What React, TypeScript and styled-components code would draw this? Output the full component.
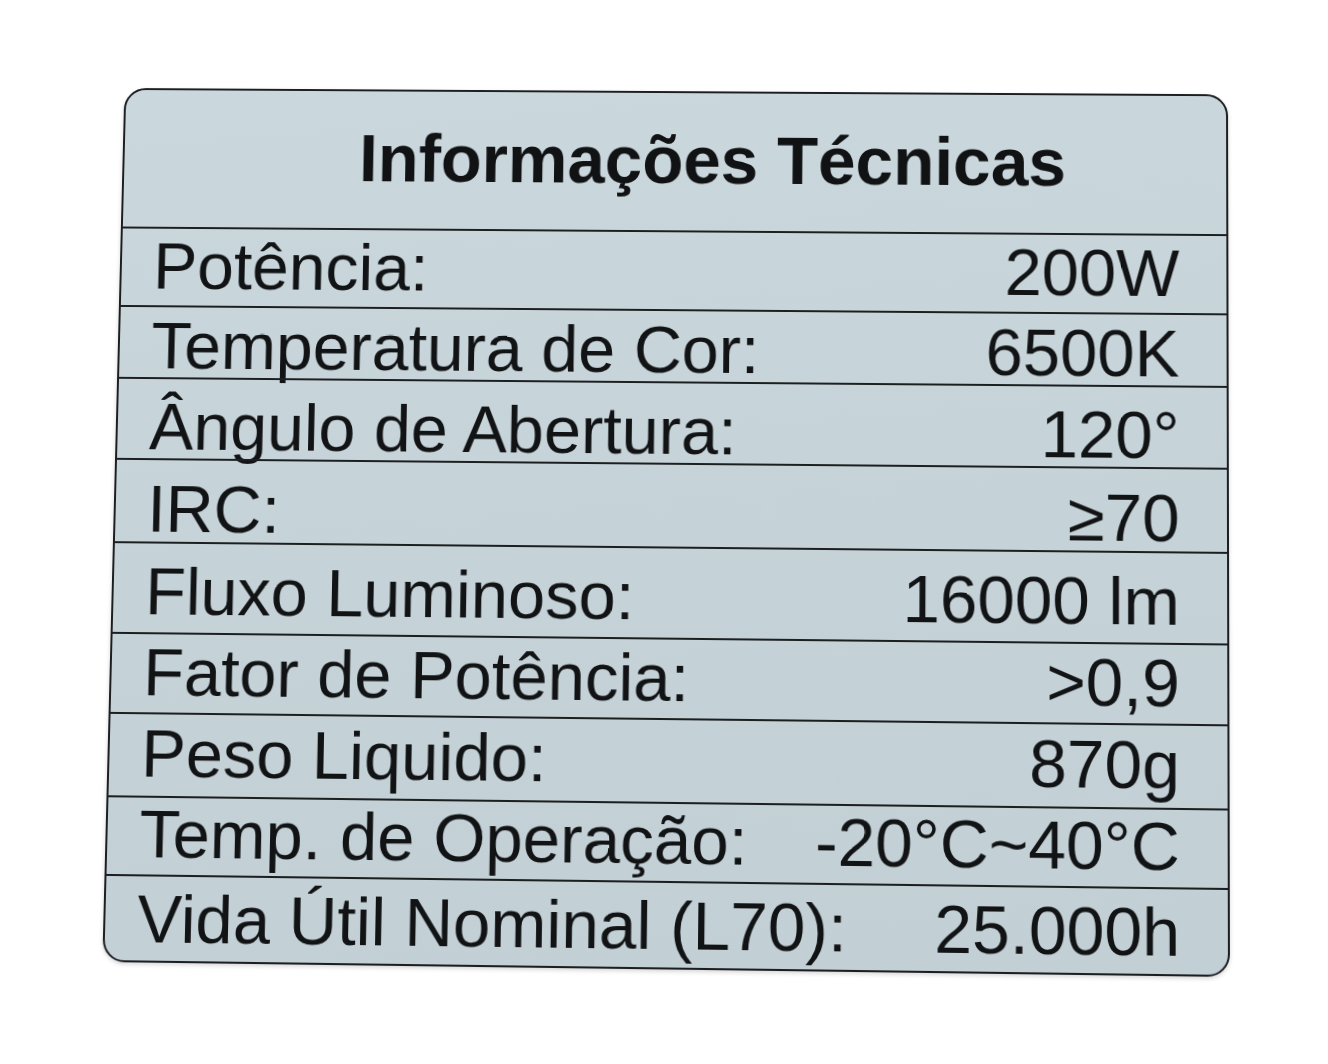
import React from "react";
import styled, { createGlobalStyle } from "styled-components";

const GlobalStyle = createGlobalStyle`
  html, body {
    margin: 0;
    padding: 0;
    background: #ffffff;
  }
  body {
    font-family: "Liberation Sans", Arial, Helvetica, sans-serif;
    color: #131517;
  }
  #root {
    width: 1328px;
    height: 1064px;
    overflow: hidden;
  }
`;

/* Local (flat) size of the label and where its layout box starts on the page */
const ORIGIN_X = 112;
const ORIGIN_Y = 90;
const W = 1118;
const H = 880;

/* Corners of the label as photographed (TL, TR, BR, BL) */
const QUAD: [number, number][] = [
  [124.4, 88],
  [1228, 94.3],
  [1230, 977],
  [102.3, 962],
];

/* Homography from the flat rectangle to the photographed quadrilateral */
function perspectiveMatrix(): string {
  const [p0, p1, p2, p3] = QUAD.map(([x, y]) => [x - ORIGIN_X, y - ORIGIN_Y]);
  const [x0, y0] = p0;
  const [x1, y1] = p1;
  const [x2, y2] = p2;
  const [x3, y3] = p3;
  const sx = x0 - x1 + x2 - x3;
  const sy = y0 - y1 + y2 - y3;
  const dx1 = x1 - x2;
  const dx2 = x3 - x2;
  const dy1 = y1 - y2;
  const dy2 = y3 - y2;
  const den = dx1 * dy2 - dx2 * dy1;
  const g = (sx * dy2 - dx2 * sy) / den;
  const h = (dx1 * sy - sx * dy1) / den;
  const a = x1 - x0 + g * x1;
  const b = x3 - x0 + h * x3;
  const c = x0;
  const d = y1 - y0 + g * y1;
  const e = y3 - y0 + h * y3;
  const f = y0;
  const v = [a / W, d / W, 0, g / W, b / H, e / H, 0, h / H, 0, 0, 1, 0, c, f, 0, 1];
  return `matrix3d(${v.map((n) => n.toFixed(8)).join(", ")})`;
}

const MATRIX = perspectiveMatrix();

const Page = styled.div`
  padding: ${ORIGIN_Y}px 0 0 ${ORIGIN_X}px;
  width: 1328px;
  height: 1064px;
  box-sizing: border-box;
`;

const Label = styled.section`
  width: ${W}px;
  height: ${H}px;
  box-sizing: border-box;
  display: flex;
  flex-direction: column;
  border: 2px solid #1c1f21;
  border-radius: 22px;
  background: linear-gradient(175deg, #cad7dc 0%, #c5d2d8 55%, #c2cfd5 100%);
  box-shadow: 0 2px 4px rgba(0, 0, 0, 0.16);
  transform-origin: 0 0;
  transform: ${MATRIX};
`;

const TitleBar = styled.header`
  height: 140px;
  box-sizing: border-box;
  display: flex;
  align-items: flex-start;
  padding: 34px 0 0 239px;
`;

const Title = styled.h1`
  margin: 0;
  font-family: "Liberation Sans", Arial, sans-serif;
  font-weight: 700;
  font-size: 68px;
  line-height: 1;
  color: #101214;
  white-space: nowrap;
`;

const Row = styled.div<{ $h: number }>`
  height: ${(p) => p.$h}px;
  box-sizing: border-box;
  border-top: 2px solid #1c1f21;
  display: flex;
  align-items: flex-end;
  justify-content: space-between;
  padding: 0 47px 0 32px;
`;

const Cell = styled.span<{ $base: number }>`
  font-family: "Liberation Sans", Arial, sans-serif;
  font-size: 67px;
  line-height: 1;
  font-weight: 400;
  color: #111315;
  white-space: nowrap;
  margin-bottom: ${(p) => p.$base - 10.3}px;
`;

const ROWS = [
  { label: "Potência:", value: "200W", h: 80, base: 17 },
  { label: "Temperatura de Cor:", value: "6500K", h: 73, base: 9 },
  { label: "Ângulo de Abertura:", value: "120°", h: 82, base: 9 },
  { label: "IRC:", value: "≥70", h: 84, base: 10 },
  { label: "Fluxo Luminoso:", value: "16000 lm", h: 91, base: 18 },
  { label: "Fator de Potência:", value: ">0,9", h: 80, base: 17 },
  { label: "Peso Liquido:", value: "870g", h: 83, base: 19 },
  { label: "Temp. de Operação:", value: "-20°C~40°C", h: 78, base: 17 },
  { label: "Vida Útil Nominal (L70):", value: "25.000h", h: 85, base: 18 },
];

export default function App() {
  return (
    <>
      <GlobalStyle />
      <Page>
        <Label>
          <TitleBar>
            <Title>Informações Técnicas</Title>
          </TitleBar>
          {ROWS.map((r) => (
            <Row key={r.label} $h={r.h}>
              <Cell $base={r.base}>{r.label}</Cell>
              <Cell $base={r.base}>{r.value}</Cell>
            </Row>
          ))}
        </Label>
      </Page>
    </>
  );
}
